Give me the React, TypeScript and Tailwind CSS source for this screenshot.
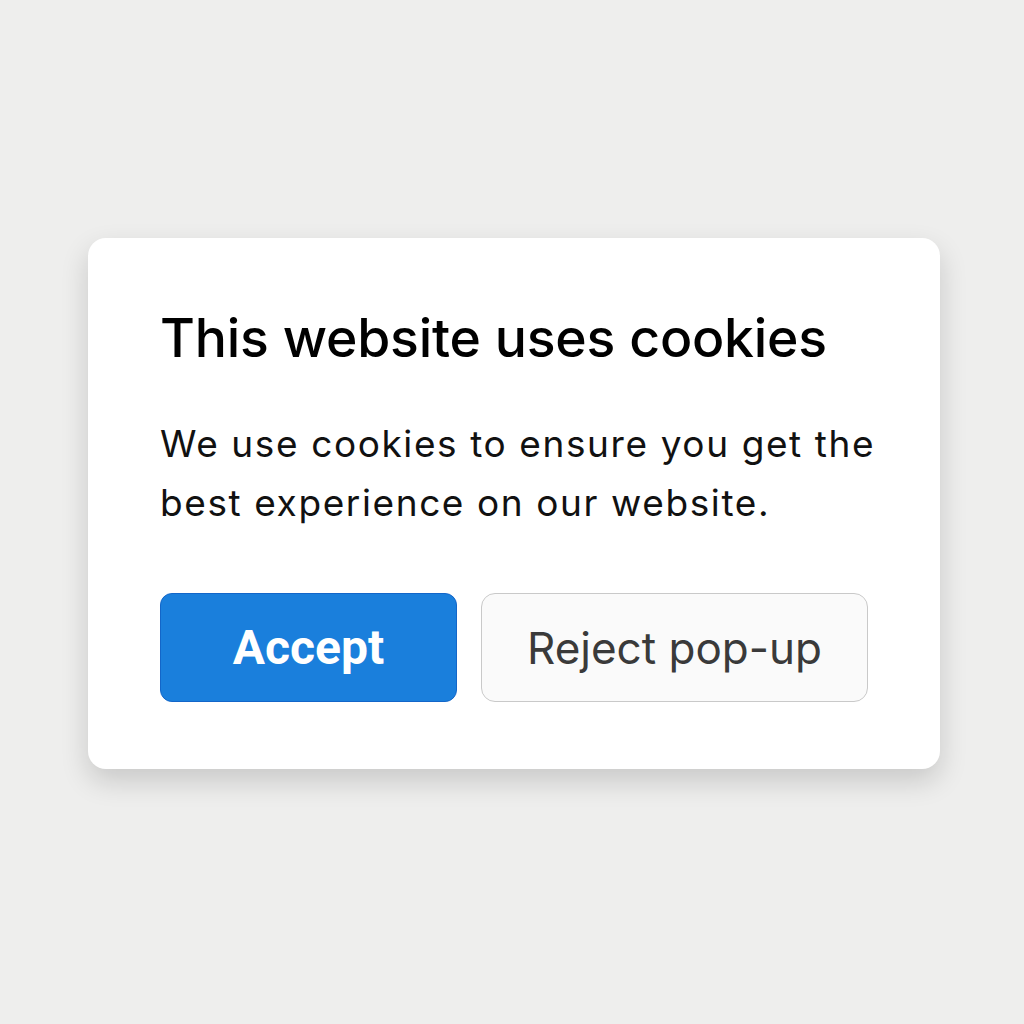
export default function App() {
  return (
    <div className="w-[1024px] h-[1024px] bg-[#eeeeed] flex items-start justify-center pt-[238px] pl-[4px]" style={{ fontFamily: 'Inter, "Noto Sans", sans-serif' }}>
      <div className="w-[852px] h-[531px] bg-white rounded-[18px] shadow-[0_12px_28px_rgba(0,0,0,0.16)] pl-[72px] pr-[50px] pt-[60px]">
        <h1 className="text-[53.5px] leading-[80px] font-medium text-black tracking-[-0.2px]">This website uses cookies</h1>
        <p className="mt-[36px] text-[37px] leading-[59px] text-[#111] tracking-[1.6px]">We use cookies to ensure you get the best experience on our website.</p>
        <div className="mt-[61px] flex gap-[24px]">
          <button className="w-[297px] h-[109px] rounded-[12px] bg-[#1a7fdc] border border-[#1366c9] text-white text-[48px] font-bold" style={{ fontFamily: 'Roboto, sans-serif' }}>Accept</button>
          <button className="w-[387px] h-[109px] rounded-[14px] bg-[#fafafa] border border-[#c9c9c9] text-[#3a3a3a] text-[44px]">Reject pop-up</button>
        </div>
      </div>
    </div>
  );
}
